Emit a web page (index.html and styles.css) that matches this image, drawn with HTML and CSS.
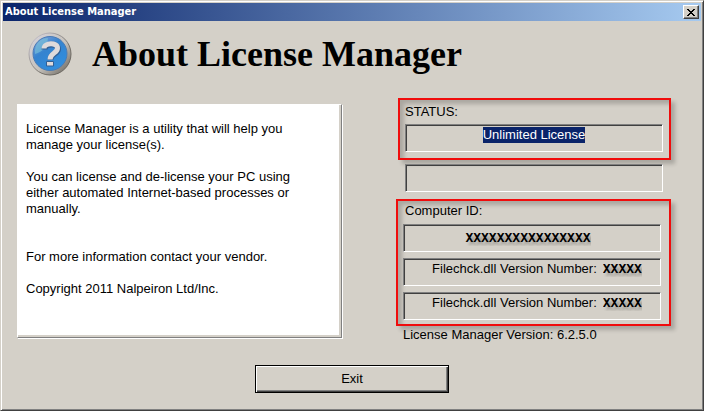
FILE: index.html
```html
<!DOCTYPE html>
<html lang="en">
<head>
    <meta charset="UTF-8">
    <meta name="viewport" content="width=device-width, initial-scale=1.0">
    <title>About License Manager</title>
    <link rel="stylesheet" href="styles.css">
</head>
<body>
    <div class="window">
        <div class="title-bar">
            <span class="title">About License Manager</span>
            <button class="close" type="button" aria-label="Close">
                <svg width="8" height="7" viewBox="0 0 8 7" shape-rendering="crispEdges">
                    <path d="M0 0h2v1h1v1h2v-1h1v-1h2v1h-1v1h-1v1h-1v1h1v1h1v1h1v1h-2v-1h-1v-1h-2v1h-1v1h-2v-1h1v-1h1v-1h1v-1h-1v-1h-1v-1h-1z"/>
                </svg>
            </button>
        </div>

        <!-- Header -->
        <header class="header">
            <svg class="logo" viewBox="0 0 44 44">
                <defs>
                    <linearGradient id="rim" x1="0" y1="0" x2="1" y2="1">
                        <stop offset="0.15" stop-color="#d2cfd4"/>
                        <stop offset="0.55" stop-color="#c6c2bc"/>
                        <stop offset="0.9" stop-color="#77726b"/>
                    </linearGradient>
                    <linearGradient id="edge" x1="0" y1="0" x2="1" y2="1">
                        <stop offset="0.1" stop-color="#c4c0c8"/>
                        <stop offset="0.6" stop-color="#77736c"/>
                        <stop offset="1" stop-color="#5f5b55"/>
                    </linearGradient>
                    <linearGradient id="ball" x1="0" y1="0" x2="0.7" y2="1">
                        <stop offset="0" stop-color="#8fa6dc"/>
                        <stop offset="0.45" stop-color="#3583cf"/>
                        <stop offset="1" stop-color="#2f8fe0"/>
                    </linearGradient>
                </defs>
                <circle cx="22" cy="22" r="21" fill="url(#rim)" stroke="url(#edge)"/>
                <circle cx="22" cy="21.5" r="17" fill="url(#ball)" stroke="#4a7bb5"/>
                <path d="M7 22C6 12 12 6 20 6C19 14 15 20 7 22Z" fill="#7cc4d8" opacity="0.6"/>
                <path d="M16.5 17.5C16.5 11.5 30 10.5 30 17C30 22.500 22 21 22.5 28" fill="none" stroke="#315f94" stroke-width="6"/>
                <path d="M16 16.5C16 10.5 29.5 10 29.5 16C29.5 21.5 22 20.5 22 27.5" fill="none" stroke="#dedadb" stroke-width="5"/>
                <path d="M18.5 29.5h7v4.500h-7z" fill="#dedadb" stroke="#315f94"/>
            </svg>
            <h1>About License Manager</h1>
        </header>

        <main class="content">
            <section class="info">
                <p>License Manager is a utility that will help you<br>manage your license(s).</p>
                <p>You can license and de-license your PC using<br>either automated Internet-based processes or<br>manually.</p>
                <p class="contact">For more information contact your vendor.</p>
                <p>Copyright 2011 Nalpeiron Ltd/Inc.</p>
            </section>

            <section class="details">
                <div class="marked status">
                    <label for="status">STATUS:</label>
                    <div class="field">
                        <input class="selected" id="status" type="text" value="Unlimited License" readonly>
                    </div>
                </div>

                <input class="field blank" type="text" aria-label="Status message" readonly>

                <div class="marked computer">
                    <label for="computer-id">Computer ID:</label>
                    <div class="field id-field">
                        <input class="masked" id="computer-id" type="text" value="XXXXXXXXXXXXXXXX" readonly>
                    </div>
                    <div class="field version-field">
                        <label for="dll-one">Filechck.dll Version Number:</label>
                        <input class="masked" id="dll-one" type="text" value="XXXXX" readonly>
                    </div>
                    <div class="field version-field">
                        <label for="dll-two">Filechck.dll Version Number:</label>
                        <input class="masked" id="dll-two" type="text" value="XXXXX" readonly>
                    </div>
                </div>
                <p class="version">License Manager Version: 6.2.5.0</p>
            </section>
        </main>

        <footer class="footer">
            <button class="exit" type="button">Exit</button>
        </footer>
    </div>
</body>
</html>
```
FILE: styles.css
```css
* {
    box-sizing: border-box;
}
body {
    margin: 0;
    background-color: #d4d0c8;
    color: #000;
    font-family: "Liberation Sans", Arial, sans-serif;
    font-size: 13px;
    line-height: 16px;
}
h1, p {
    margin: 0;
}
input {
    border: none;
    padding: 0;
    background: none;
    color: inherit;
    font: inherit;
}
.window {
    display: flex;
    flex-direction: column;
    min-height: 100vh;
    padding: 1px;
    border: 1px solid;
    border-color: #d4d0c8 #404040 #404040 #d4d0c8;
    box-shadow: inset 1px 1px #fff, inset -1px -1px #808080;
}
.title-bar {
    display: flex;
    align-items: center;
    justify-content: space-between;
    height: 18px;
    margin: 1px 1px 0;
    padding: 0 2px;
    background: linear-gradient(to right, #0a246a, #a6caf0);
}
.title {
    color: #fff;
    font-family: "DejaVu Sans Condensed", "DejaVu Sans", sans-serif;
    font-size: 11px;
    font-weight: bold;
}
.close {
    display: flex;
    align-items: center;
    justify-content: center;
    width: 16px;
    height: 14px;
    padding: 0;
    border: 1px solid;
    border-color: #fff #404040 #404040 #fff;
    background-color: #d4d0c8;
    box-shadow: inset -1px -1px #808080;
}
.header {
    display: flex;
    align-items: center;
    gap: 20px;
    height: 77px;
    padding: 0 26px 12px;
}
.logo {
    width: 44px;
    height: 44px;
}
h1 {
    font-family: "Liberation Serif", "Times New Roman", serif;
    font-size: 36px;
    line-height: 40px;
}
.content {
    display: grid;
    grid-template-columns: 325fr 275fr;
    align-items: start;
    gap: 54px;
    padding: 0 31px 0 15px;
}
.info {
    min-height: 234px;
    margin-top: 6px;
    padding: 16px 8px;
    border: 1px solid;
    border-color: #fff #808080 #808080 #fff;
    background-color: #fff;
    box-shadow: inset -2px -2px #d4d0c8, 1px 1px #fff;
}
.info p {
    margin-bottom: 16px;
}
.info .contact {
    margin-top: 32px;
}
.marked {
    border: 2px solid #f00c0c;
    box-shadow: 4px 4px 4px rgba(0, 0, 0, 0.2), inset 4px 4px 4px rgba(0, 0, 0, 0.2);
}
.marked > label {
    display: block;
}
.status {
    margin-left: 2px;
    padding: 4px 6px 6px 5px;
}
.status > label {
    margin-bottom: 4px;
}
.field {
    display: flex;
    justify-content: center;
    align-items: flex-start;
    height: 28px;
    padding-top: 2px;
    border: 1px solid;
    border-color: #808080 #fff #fff #808080;
    box-shadow: inset 1px 1px #404040;
}
.selected {
    field-sizing: content;
    background-color: #0a246a;
    color: #fff;
}
.blank {
    width: calc(100% - 17px);
    margin: 4px 8px 7px 9px;
}
.computer {
    padding: 2px 8px 4px 5px;
}
.computer > label {
    margin: 0 2px 5px;
}
.field + .field {
    margin-top: 6px;
}
.masked {
    field-sizing: content;
    font-family: "DejaVu Sans Mono", monospace;
    font-size: 13px;
    font-weight: bold;
    text-shadow: 3px 3px 3px rgba(0, 0, 0, 0.3);
}
.id-field {
    align-items: center;
    padding: 0 8px 0 0;
}
.version-field {
    gap: 6px;
    padding-left: 10px;
}
.version {
    margin: 1px 0 0 7px;
}
.footer {
    display: flex;
    justify-content: center;
    margin-top: 22px;
    padding-bottom: 15px;
}
.exit {
    width: 194px;
    height: 28px;
    padding: 0;
    border: 1px solid #000;
    background-color: #d4d0c8;
    color: #000;
    font: inherit;
    box-shadow: inset 1px 1px #fff, inset -1px -1px #404040, inset -2px -2px #808080;
}
```
